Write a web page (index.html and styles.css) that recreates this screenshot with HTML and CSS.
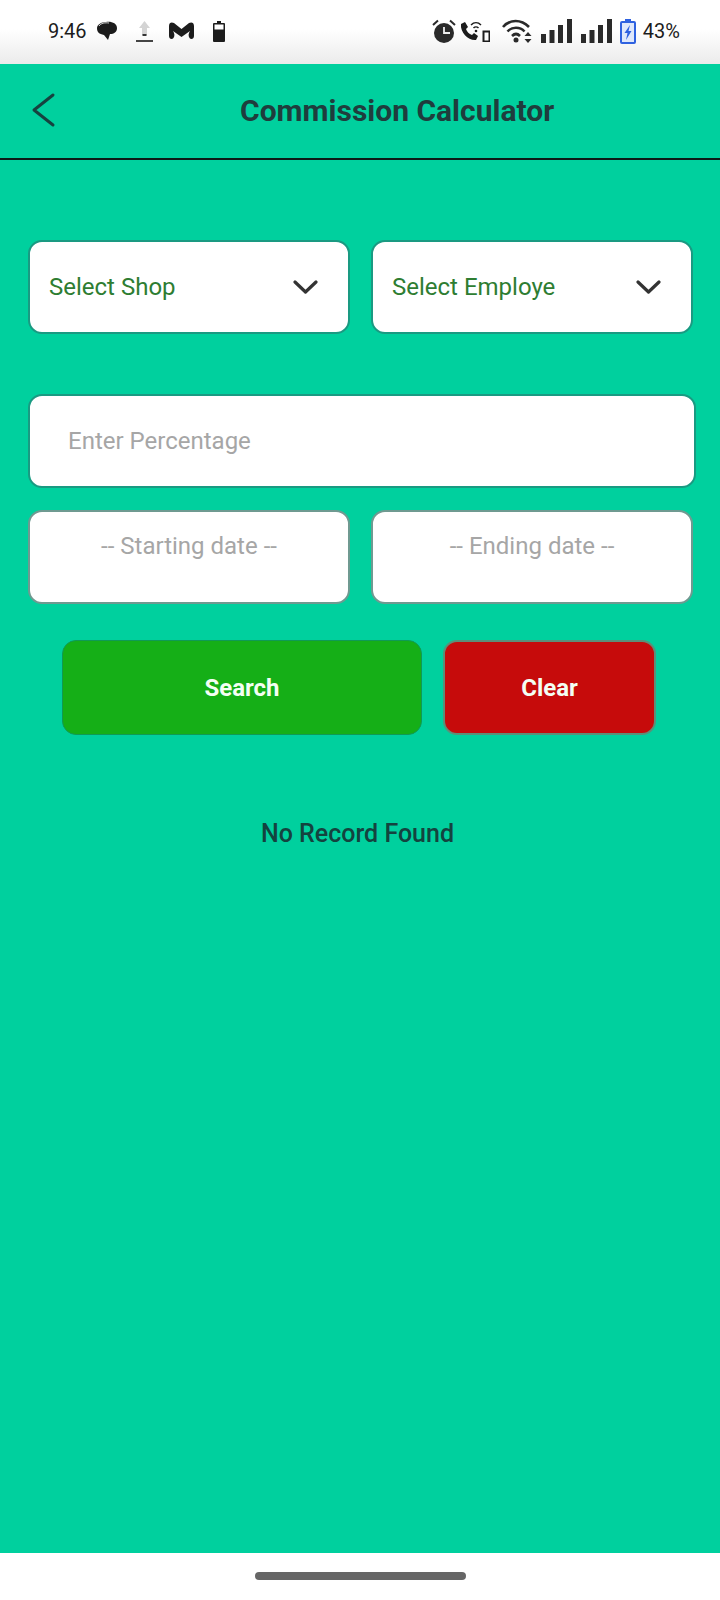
FILE: index.html
```html
<!DOCTYPE html>
<html>
<head>
    <title>Commission Calculator</title>
    <link rel="stylesheet" href="styles.css">
</head>
<body>
    <div class="status-bar">
        <div class="status-left">
            <span class="status-text">9:46</span>
            <svg class="icon-chat" width="22" height="20" viewBox="0 0 22 20"><path d="M10 1C15 0 21 2 21 7C21 11 18 13 14 13L12 19L8 14C3 13 1 11 1 7C1 4 5 1 10 1Z" fill="#1c1c1c"/><path d="M3 5C5 2 9 1.500 13 2" fill="none" stroke="#fff" stroke-width="0.800"/></svg>
            <svg class="icon-upload" width="17" height="21" viewBox="0 0 17 21"><path d="M8.500 0L14 7H11V14H6V7H3Z" fill="#d4d4d4"/><rect x="6.500" y="13" width="4" height="2" fill="#333"/><rect x="0" y="19" width="17" height="2" fill="#444"/></svg>
            <svg class="icon-mail" width="25" height="18" viewBox="0 0 25 18"><path d="M0 4C0 0 3 0 5 1L12.500 7L20 1C22 0 25 0 25 4V14C25 17 22 18 20.500 16C19 14 19.500 11 21 9L12.500 15L4 9C5.500 11 6 14 4.500 16C3 18 0 17 0 14Z" fill="#1c1c1c"/></svg>
            <svg class="icon-battery" width="12" height="21" viewBox="0 0 12 21"><path d="M4 0H8V2H11Q12 2 12 3V20Q12 21 11 21H1Q0 21 0 20V3Q0 2 1 2H4Z" fill="#1c1c1c"/><rect x="1.500" y="3.500" width="9" height="5" fill="#fff"/></svg>
        </div>
        <div class="status-right">
            <svg class="icon-alarm" width="24" height="24" viewBox="0 0 24 24"><circle cx="12" cy="14" r="10" fill="#2a2a2a"/><path d="M12 8V14H18" fill="none" stroke="#eee" stroke-width="1.800"/><path d="M1 6L6 1.500M23 6L18 1.500" stroke="#2a2a2a" stroke-width="2"/></svg>
            <svg class="icon-call" width="30" height="21" viewBox="0 0 30 21"><path d="M1 3L5 1L8 6L6 8C7 11 9 13 12 14L14 12L18 15L16 19C9 20 0 12 1 3Z" fill="#1c1c1c"/><path d="M11 4C14 1 18 1 21 4M13.500 7C15 5.500 17 5.500 18.500 7" fill="none" stroke="#1c1c1c" stroke-width="1.500"/><circle cx="16" cy="10" r="1.300" fill="#1c1c1c"/><rect x="23.500" y="10.500" width="6" height="10" fill="none" stroke="#1c1c1c" stroke-width="2"/></svg>
            <svg class="icon-wifi" width="30" height="24" viewBox="0 0 30 24"><path d="M1 8C8 0 19 0 27 8M5.500 12.500C10 7.500 18 7.500 22.500 12.500M10 17C12.500 14.500 15.500 14.500 18 17" fill="none" stroke="#2a2a2a" stroke-width="2.600"/><circle cx="14" cy="21" r="2.500" fill="#2a2a2a"/><path d="M26 13L29.500 17H22.500ZM26 24L29.500 20H22.500Z" fill="#2a2a2a"/></svg>
            <svg class="icon-signal" width="31" height="24" viewBox="0 0 31 24"><rect x="0" y="15" width="5" height="9" fill="#2a2a2a"/><rect x="8.500" y="11" width="5" height="13" fill="#2a2a2a"/><rect x="17" y="6" width="5" height="18" fill="#2a2a2a"/><rect x="26" y="0" width="5" height="24" fill="#2a2a2a"/></svg>
            <svg class="icon-signal" width="31" height="24" viewBox="0 0 31 24"><rect x="0" y="15" width="5" height="9" fill="#2a2a2a"/><rect x="8.500" y="11" width="5" height="13" fill="#2a2a2a"/><rect x="17" y="6" width="5" height="18" fill="#2a2a2a"/><rect x="26" y="0" width="5" height="24" fill="#2a2a2a"/></svg>
            <svg class="icon-charge" width="16" height="25" viewBox="0 0 16 25"><path d="M5 0H11V2H14Q16 2 16 4V23Q16 25 14 25H2Q0 25 0 23V4Q0 2 2 2H5Z" fill="#2f62e0"/><rect x="2" y="4" width="12" height="19" fill="#dfe8fb"/><path d="M10 6L4.500 14H7.500L6 21L11.500 12H8.500Z" fill="#2f62e0"/></svg>
            <span class="status-text battery-text">43%</span>
        </div>
    </div>

    <div class="header">
        <svg class="back-icon" width="26" height="36" viewBox="0 0 26 36"><path d="M23 3L4 18L23 33" fill="none" stroke="#16423f" stroke-width="3" stroke-linecap="round" stroke-linejoin="round"/></svg>
        <h1 class="title">Commission Calculator</h1>
    </div>

    <div class="content">
        <div class="row row-selects">
            <div class="box select-box">
                <span>Select Shop</span>
                <svg width="25" height="14" viewBox="0 0 25 14"><path d="M2 2L12.500 12L23 2" fill="none" stroke="#333" stroke-width="3.200" stroke-linecap="round" stroke-linejoin="round"/></svg>
            </div>
            <div class="box select-box">
                <span>Select Employe</span>
                <svg width="25" height="14" viewBox="0 0 25 14"><path d="M2 2L12.500 12L23 2" fill="none" stroke="#333" stroke-width="3.200" stroke-linecap="round" stroke-linejoin="round"/></svg>
            </div>
        </div>

        <div class="box percent-box">Enter Percentage</div>

        <div class="row row-dates">
            <div class="box date-box">-- Starting date --</div>
            <div class="box date-box">-- Ending date --</div>
        </div>

        <div class="buttons">
            <button class="btn btn-search">Search</button>
            <button class="btn btn-clear">Clear</button>
        </div>

        <p class="no-record">No Record Found</p>
    </div>

    <div class="nav-bar">
        <div class="nav-pill"></div>
    </div>
</body>
</html>
```

FILE: styles.css
```css
* {
    box-sizing: border-box;
}

body {
    font-family: Roboto, Arial, sans-serif;
    margin: 0;
    padding: 0;
    height: 1600px;
    display: flex;
    flex-direction: column;
    background-color: #00d09e;
    overflow: hidden;
}

.status-bar {
    height: 64px;
    flex: none;
    display: flex;
    justify-content: space-between;
    align-items: center;
    padding: 0 40px 2px 48px;
    background: linear-gradient(#fff 0%, #fff 45%, #ebebeb 100%);
}

.status-left,
.status-right {
    display: flex;
    align-items: center;
}

.status-text {
    font-size: 20px;
    color: #1c1c1c;
}

.icon-chat {
    margin-left: 9px;
}

.icon-upload {
    margin-left: 18px;
}

.icon-mail {
    margin-left: 16px;
}

.icon-battery {
    margin-left: 19px;
}

.icon-call {
    margin-left: 4px;
}

.icon-wifi {
    margin-left: 12px;
}

.icon-signal {
    margin-left: 9px;
}

.icon-charge {
    margin-left: 8px;
}

.battery-text {
    margin-left: 7px;
}

.header {
    height: 96px;
    flex: none;
    display: flex;
    align-items: center;
    padding: 0 0 2px 30px;
    border-bottom: 2px solid #0c1a17;
}

.title {
    margin: 0 0 0 184px;
    font-size: 30px;
    font-weight: 700;
    color: #1f3d3d;
}

.content {
    flex: 1;
    padding: 80px 24px 0 28px;
}

.row {
    display: flex;
    gap: 21px;
}

.box {
    height: 94px;
    background-color: #fff;
    border-radius: 14px;
    font-size: 24px;
    border: 2px solid #1a9a82;
}

.box.date-box,
.box.select-box {
    width: 322px;
}

.select-box {
    display: flex;
    justify-content: space-between;
    align-items: center;
    padding: 0 30px 0 19px;
    color: #2e7d32;
}

.percent-box {
    width: 668px;
    margin-top: 60px;
    padding: 0 38px;
    line-height: 90px;
    color: #a6a6a6;
}

.row-dates {
    margin-top: 22px;
}

.date-box {
    text-align: center;
    padding-top: 20px;
    color: #a6a6a6;
    border-color: #6f9a91;
}

.buttons {
    display: flex;
    gap: 21px;
    margin: 36px 0 0 34px;
}

.btn {
    height: 95px;
    border-radius: 14px;
    border: none;
    color: #f4fff4;
    font-family: Roboto, Arial, sans-serif;
    font-size: 24px;
    font-weight: 700;
}

.btn-search {
    width: 360px;
    background-color: #15af17;
    border: 1px solid #0f9a55;
}

.btn-clear {
    width: 213px;
    background-color: #c60b0b;
    border: 2px solid #5c8f78;
}

.no-record {
    margin: 84px 0 0 0;
    padding-right: 9px;
    text-align: center;
    font-size: 25px;
    font-weight: 500;
    color: #14433f;
}

.nav-bar {
    height: 47px;
    flex: none;
    display: flex;
    justify-content: center;
    padding-top: 19px;
    background-color: #fff;
}

.nav-pill {
    width: 211px;
    height: 8px;
    border-radius: 4px;
    background-color: #666;
}
```
